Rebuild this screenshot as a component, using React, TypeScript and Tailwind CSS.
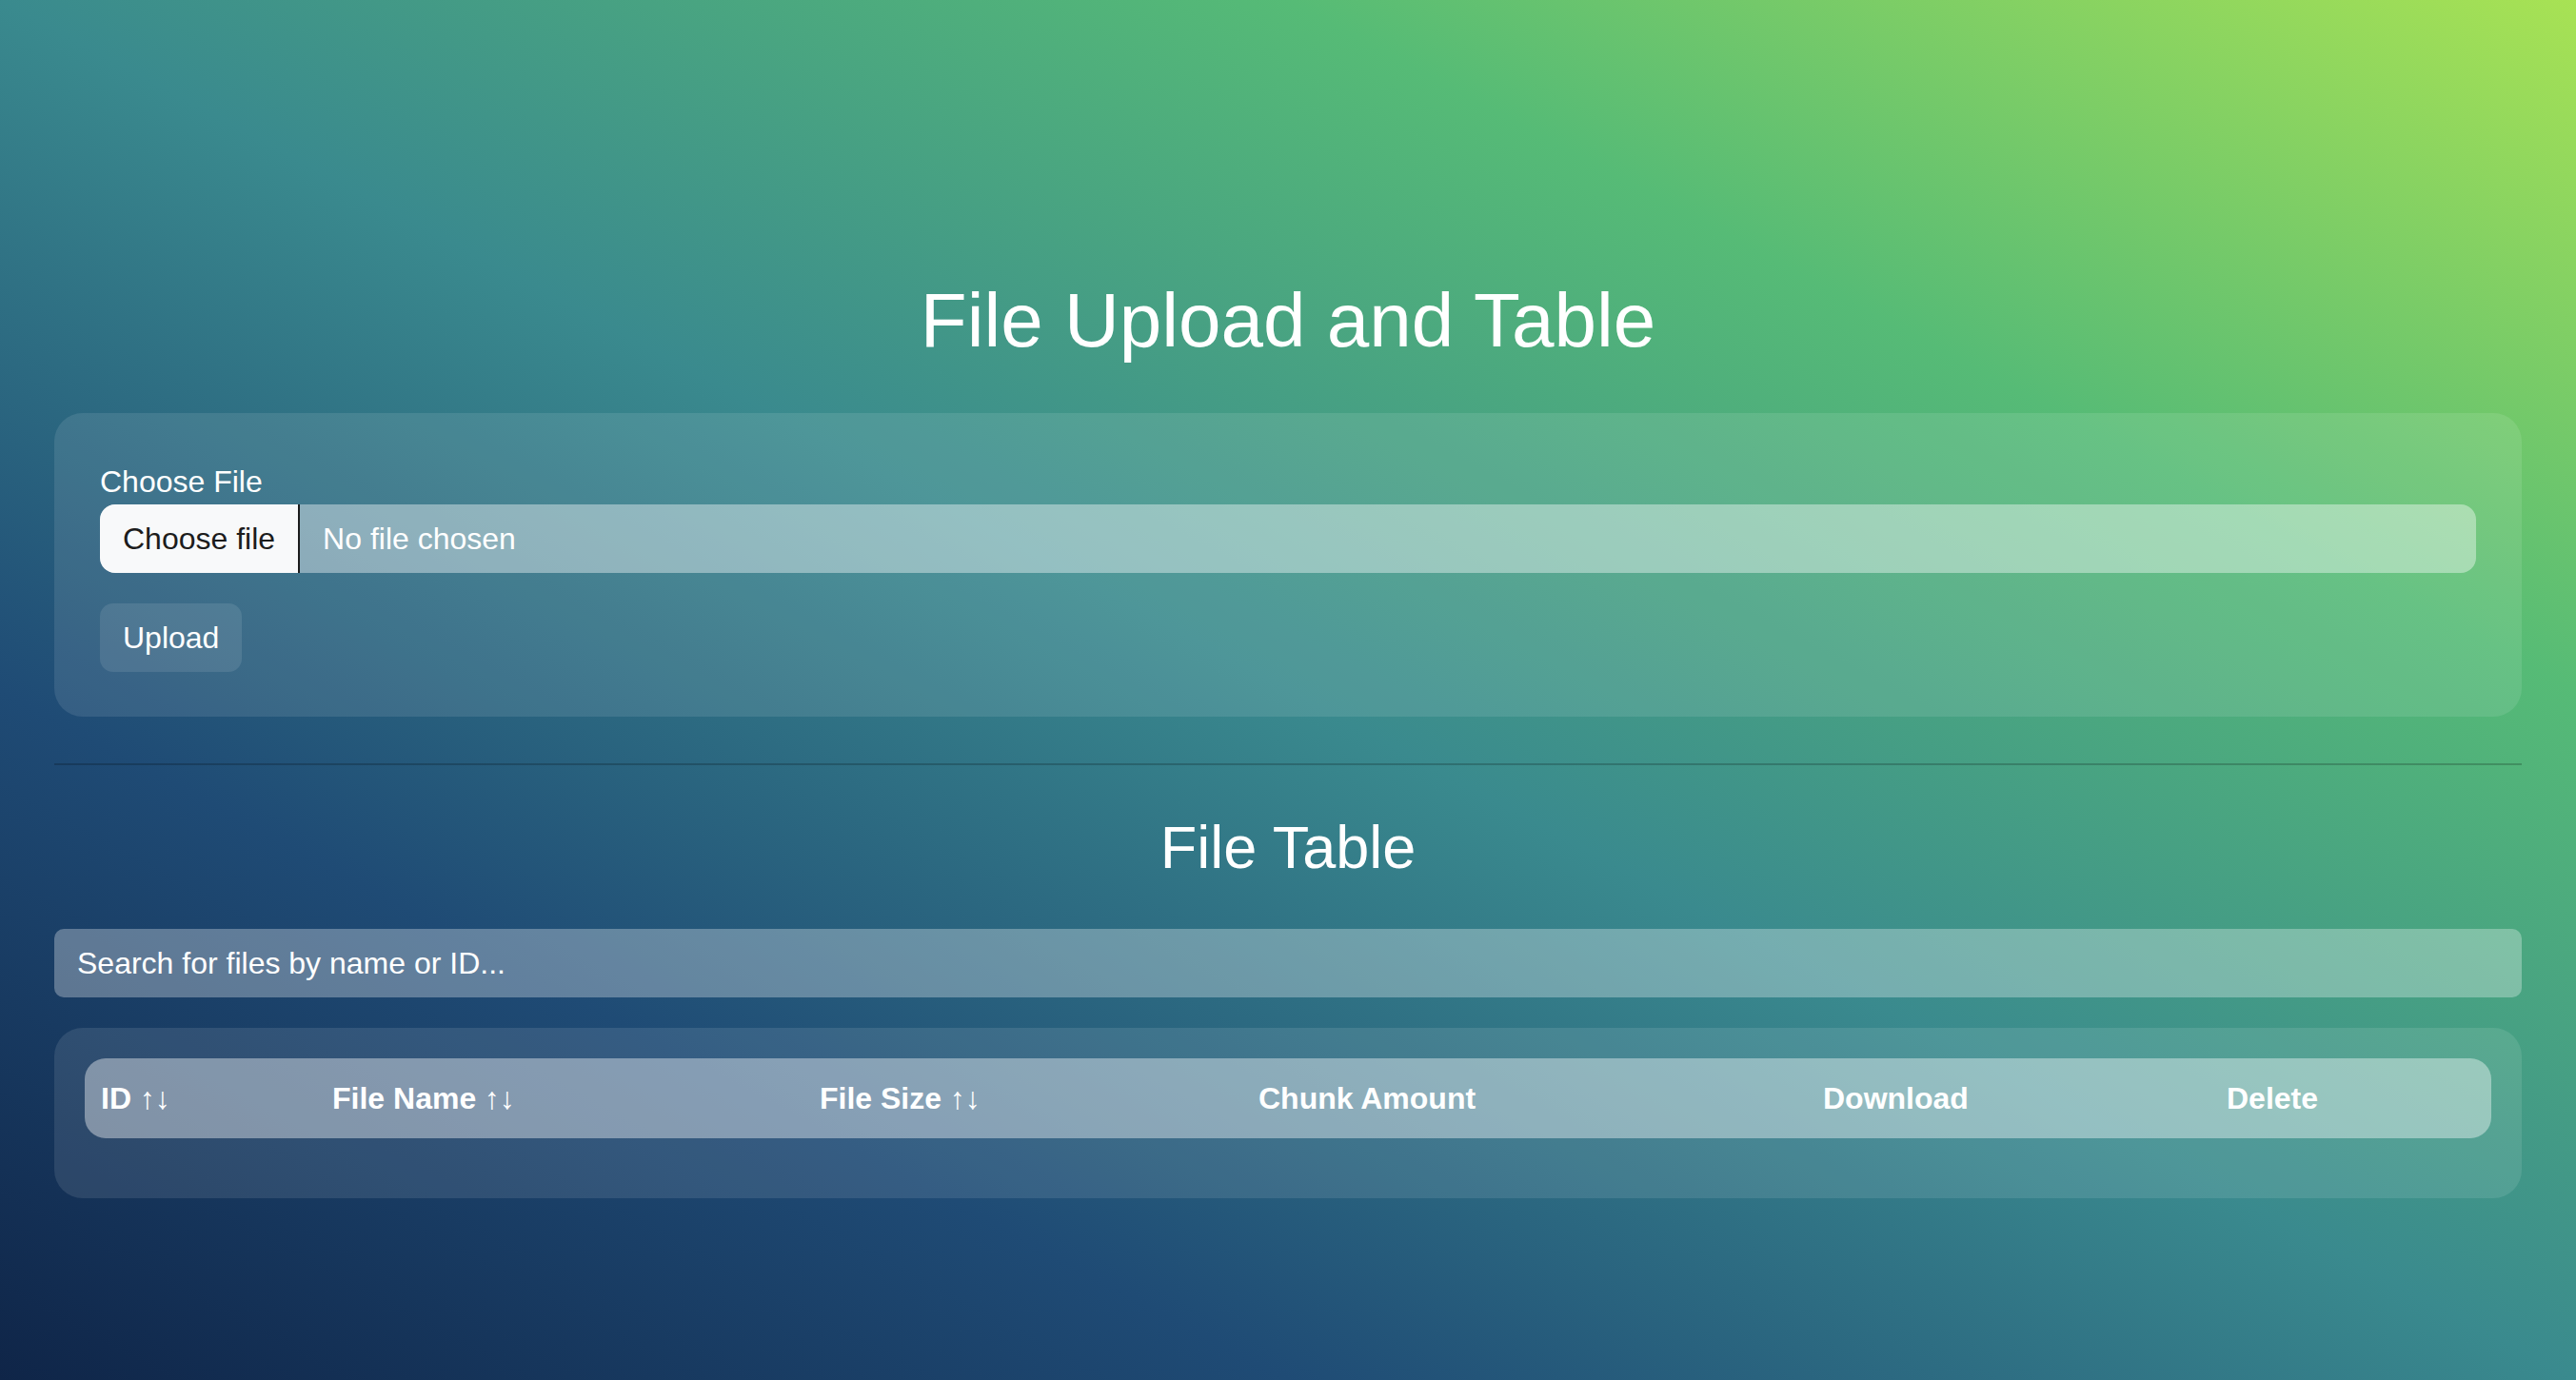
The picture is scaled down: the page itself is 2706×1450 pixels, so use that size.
import React from "react";

const columns = [
  { label: "ID", sortable: true, width: "w-[243px]" },
  { label: "File Name", sortable: true, width: "w-[512px]" },
  { label: "File Size", sortable: true, width: "w-[461px]" },
  { label: "Chunk Amount", sortable: false, width: "w-[593px]" },
  { label: "Download", sortable: false, width: "w-[424px]" },
  { label: "Delete", sortable: false, width: "w-[295px]" },
];

const App = () => (
  <div className="min-h-screen bg-[linear-gradient(to_top_right,#0f2548_0%,#1f4b75_25%,#3a8a8e_50%,#56bb76_75%,#a8e254_100%)] font-['Liberation_Sans',Arial,sans-serif] text-white">
    <div className="px-[57px] pt-[297px] pb-10">
      <h1 className="text-center text-[80px] leading-none font-normal">
        File Upload and Table
      </h1>

      {/* upload panel */}
      <section className="mt-[57px] rounded-[30px] bg-white/10 px-12 pt-[56px] pb-[47px]">
        <label className="block text-[32px] leading-none mb-2">Choose File</label>
        <div className="flex h-[72px] items-center rounded-2xl bg-white/40">
          <span className="flex h-full items-center rounded-l-2xl border-r-2 border-[#1c1c1c] bg-[#f8f9fa] px-6 text-[32px] text-[#1c1c1c]">
            Choose file
          </span>
          <span className="pl-6 text-[32px]">No file chosen</span>
        </div>
        <button className="mt-8 flex h-[72px] items-center rounded-[14px] bg-white/10 px-6 text-[32px] text-white">
          Upload
        </button>
      </section>

      <hr className="mt-[49px] h-[2px] border-0 bg-black/20" />

      <h2 className="mt-[55px] text-center text-[63px] leading-none font-normal">File Table</h2>

      <input
        type="text"
        placeholder="Search for files by name or ID..."
        className="mt-[54px] block h-[72px] w-full rounded-[10px] bg-white/30 px-6 text-[32px] text-white outline-none placeholder:text-white"
      />

      {/* table panel */}
      <section className="mt-8 rounded-[30px] bg-white/10 px-8 pt-8 pb-[63px]">
        <div className="rounded-[22px] bg-white/40">
          <table className="w-full table-fixed border-collapse">
            <thead>
              <tr className="h-[84px]">
                {columns.map((c) => (
                  <th
                    key={c.label}
                    className={`${c.width} pl-[17px] text-left align-middle text-[32px] font-bold`}
                  >
                    {c.label}
                    {c.sortable && <span className="font-normal"> ↑↓</span>}
                  </th>
                ))}
              </tr>
            </thead>
            <tbody></tbody>
          </table>
        </div>
      </section>
    </div>
  </div>
);

export default App;
